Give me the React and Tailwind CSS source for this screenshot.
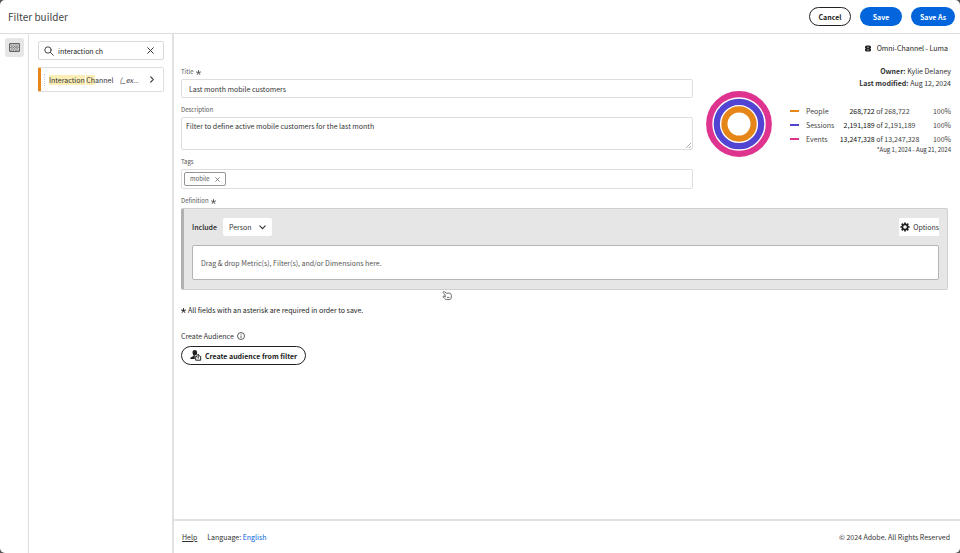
import React from 'react';

const stats = [
  { name: 'People', count: '268,722', total: '268,722', share: '100%', color: 'bg-[#e68619]' },
  { name: 'Sessions', count: '2,191,189', total: '2,191,189', share: '100%', color: 'bg-[#5144d3]' },
  { name: 'Events', count: '13,247,328', total: '13,247,328', share: '100%', color: 'bg-[#de3490]' },
];

function Header() {
  return (
    <header className="flex h-[34px] shrink-0 items-center justify-between border-b border-[#dedede] pl-2 pr-[5px]">
      <h1 className="text-[10px] leading-4 text-[#444]">Filter builder</h1>
      <div className="flex items-center gap-[9px] text-[7px] font-bold leading-3">
        <button type="button" className="h-[19px] w-[42px] rounded-full border border-[#222] bg-white text-[#222]">Cancel</button>
        <button type="button" className="h-[19px] w-[42px] rounded-full bg-[#0265dc] text-white">Save</button>
        <button type="button" className="h-[19px] w-[44px] rounded-full bg-[#0265dc] text-white">Save As</button>
      </div>
    </header>
  );
}

function Rail() {
  return (
    <nav className="w-[29px] shrink-0 border-r border-[#dedede] px-[5px] pt-1">
      <button type="button" aria-label="Components" className="flex h-[19px] w-[19px] items-center justify-center rounded-[3px] bg-[#e6e6e6]">
        <svg width="11" height="9" viewBox="0 0 11 9" fill="none" stroke="#444" strokeWidth="0.8">
          <rect x="0.5" y="0.5" width="10" height="8" rx="0.5" />
          <path d="M1.200 2h1.500M3.700 2h1.500M6.200 2h1.500M8.600 2h1.200M2.200 3.300h1.500M4.800 3.300h1.500M7.300 3.300h1.500M1.200 4.600h1.500M3.700 4.600h1.500M6.200 4.600h1.500M8.600 4.600h1.200M2.200 5.900h1.500M4.800 5.900h1.500M7.300 5.900h1.500M1.200 7.200h1.500M3.700 7.200h1.500M6.200 7.200h1.500M8.600 7.200h1.200" />
        </svg>
      </button>
    </nav>
  );
}

function Components() {
  return (
    <aside className="w-[145px] shrink-0 border-r-2 border-[#e1e1e1] pl-[9px] pr-2 pt-[7px]">
      <div className="flex h-[19px] items-center rounded-[2px] border border-[#dadada] pl-[5px] pr-[9px]">
        <svg width="10" height="10" viewBox="0 0 10 10" fill="none" stroke="#444" strokeWidth="1" strokeLinecap="round">
          <circle cx="4" cy="4" r="3.2" />
          <path d="M6.4 6.4 9.3 9.3" />
        </svg>
        <input aria-label="Search components" defaultValue="interaction ch" className="ml-1 min-w-0 flex-1 bg-transparent text-[7px] leading-3 text-[#222] outline-none" />
        <button type="button" aria-label="Clear search">
          <svg width="7" height="7" viewBox="0 0 7 7" stroke="#333" strokeWidth="1" strokeLinecap="round">
            <path d="M.7.7l5.6 5.6M6.3.7.7 6.3" />
          </svg>
        </button>
      </div>
      <button type="button" className="mt-[7px] flex h-[25px] w-full items-center overflow-hidden rounded-[2px] border border-l-[3px] border-[#dfdfdf] border-l-[#e68619] pr-[9px] text-left text-[7px] leading-3 text-[#333]">
        <span className="ml-[3px] h-3 border-l border-dotted border-[#ccc]" />
        <span className="ml-1 whitespace-nowrap">
          <mark className="bg-[#faedb5] text-inherit">Interaction</mark>{' '}
          <mark className="bg-[#faedb5] text-inherit">Ch</mark>annel
        </span>
        <i className="ml-[6px]">(_ex...</i>
        <svg className="ml-auto" width="4" height="7" viewBox="0 0 4 7" fill="none" stroke="#333" strokeWidth="1.1" strokeLinecap="round">
          <path d="M.7.8 3.3 3.5.7 6.2" />
        </svg>
      </button>
    </aside>
  );
}

function Label({ htmlFor, required, children }) {
  return (
    <label htmlFor={htmlFor} className="flex h-[14px] items-center gap-[2px] text-[6px] leading-[14px] text-[#555]">
      {children}
      {required && <Asterisk />}
    </label>
  );
}

function Asterisk() {
  return (
    <svg width="5" height="5" viewBox="0 0 5 5" stroke="currentColor" strokeWidth="1" aria-hidden="true">
      <path d="M2.5 2.6V.2M2.5 2.6 4.9 1.9M2.5 2.6 4 4.8M2.5 2.6 1 4.8M2.5 2.6.1 1.9" />
    </svg>
  );
}

function Form() {
  return (
    <div className="min-w-0 flex-1">
      <Label htmlFor="title" required>Title</Label>
      <input id="title" defaultValue="Last month mobile customers" className="block h-[19px] w-full rounded-[2px] border border-[#dedede] px-[7px] text-[7px] leading-3 text-[#333]" />
      <div className="h-[5px]" />
      <Label htmlFor="description">Description</Label>
      <div className="relative">
        <textarea id="description" defaultValue="Filter to define active mobile customers for the last month" className="block h-[33px] w-full resize-none rounded-[2px] border border-[#dedede] px-1 py-[2px] text-[7px] leading-3 text-[#333]" />
        <svg className="absolute bottom-[2px] right-[2px]" width="5" height="5" viewBox="0 0 5 5" stroke="#888" strokeWidth="0.7">
          <path d="M0 5 5 0M2.8 5 5 2.8" />
        </svg>
      </div>
      <div className="h-[5px]" />
      <Label htmlFor="tags">Tags</Label>
      <div className="flex h-5 items-center rounded-[2px] border border-[#dedede] px-[2px]">
        <span className="flex h-[14px] items-center gap-[5px] rounded-[2px] border border-[#959595] px-[5px] text-[6px] leading-3 text-[#555]">
          mobile
          <button type="button" aria-label="Remove tag mobile">
            <svg width="5" height="5" viewBox="0 0 5 5" stroke="#666" strokeWidth="0.8">
              <path d="M.4.4l4.2 4.2M4.6.4.4 4.6" />
            </svg>
          </button>
        </span>
        <input id="tags" className="h-3 min-w-0 flex-1 outline-none" />
      </div>
    </div>
  );
}

function Summary() {
  return (
    <div className="w-[258px] shrink-0">
      <div className="text-right text-[7px] leading-3 text-[#333]">
        <p><b>Owner:</b> Kylie Delaney</p>
        <p><b>Last modified:</b> Aug 12, 2024</p>
      </div>
      <div className="flex items-start pt-[2px]">
        <svg className="ml-[13px] shrink-0" width="66" height="66" viewBox="0 0 66 66" fill="none">
          <circle cx="33" cy="33" r="29.8" stroke="#de3490" strokeWidth="6.2" />
          <circle cx="33" cy="33" r="22.2" stroke="#5144d3" strokeWidth="6.2" />
          <circle cx="33" cy="33" r="14.6" stroke="#e68619" strokeWidth="6.2" />
        </svg>
        <div className="ml-[18px] flex-1 pt-[13px]">
          <table className="w-full table-fixed text-[7px] leading-[14px] text-[#444]">
            <tbody>
              {stats.map((s) => (
                <tr key={s.name}>
                  <td className="w-4 p-0"><span className={`block h-[2px] w-[9px] ${s.color}`} /></td>
                  <th scope="row" className="w-[32px] p-0 text-left font-normal">{s.name}</th>
                  <td className="whitespace-nowrap p-0 text-center"><span className="text-[#111]">{s.count}</span> of {s.total}</td>
                  <td className="w-[30px] p-0 text-right">{s.share}</td>
                </tr>
              ))}
            </tbody>
          </table>
          <p className="text-right text-[6px] leading-[8px] text-[#333]">*Aug 1, 2024 - Aug 21, 2024</p>
        </div>
      </div>
    </div>
  );
}

function Definition() {
  return (
    <section className="mr-[3px]">
      <Label htmlFor="scope" required>Definition</Label>
      <div className="rounded-[2px] border border-l-[3px] border-[#cfcfcf] border-l-[#b1b1b1] bg-[#e6e6e6] px-2 py-[9px]">
        <div className="flex h-[18px] items-center text-[7px] leading-3 text-[#333]">
          <span className="font-medium text-[#222]">Include</span>
          <div className="relative ml-[6px]">
            <select id="scope" className="block h-[18px] w-[49px] appearance-none rounded-[2px] bg-white pl-[6px] text-[7px] leading-3 text-[#333]">
              <option>Person</option>
            </select>
            <svg className="pointer-events-none absolute right-[6px] top-[7px]" width="7" height="5" viewBox="0 0 7 5" fill="none" stroke="#333" strokeWidth="1.1" strokeLinecap="round">
              <path d="M.8.8 3.5 3.7 6.2.8" />
            </svg>
          </div>
          <button type="button" className="ml-auto flex h-[18px] items-center gap-[3px] bg-white pl-[1px] text-[7px] leading-3">
            <svg width="10" height="10" viewBox="0 0 10 10" fill="none" stroke="#222">
              <circle cx="5" cy="5" r="2.7" strokeWidth="1.8" />
              <path strokeWidth="1.7" d="M5 .4v1.8M5 7.8v1.8M.4 5h1.8M7.8 5h1.8M1.7 1.7 3 3M7 7l1.3 1.3M8.3 1.7 7 3M3 7 1.7 8.3" />
            </svg>
            Options
          </button>
        </div>
        <div className="mt-[9px] flex h-[35px] items-center rounded-[2px] border border-[#b5b5b5] bg-white px-2 text-[7px] leading-3 text-[#555]">
          Drag &amp; drop Metric(s), Filter(s), and/or Dimensions here.
        </div>
      </div>
    </section>
  );
}

function Audience() {
  return (
    <section className="text-[7px] leading-3 text-[#222]">
      <p className="mt-[14px] flex items-center gap-[2px]"><Asterisk />All fields with an asterisk are required in order to save.</p>
      <h2 className="mt-[14px] flex items-center gap-[3px] text-[#333]">
        Create Audience
        <svg width="8" height="8" viewBox="0 0 8 8" fill="none" stroke="#333" strokeWidth="0.8">
          <circle cx="4" cy="4" r="3.5" />
          <path d="M4 3.5V6M4 1.9v.8" />
        </svg>
      </h2>
      <button type="button" className="mt-1 flex h-[19px] items-center gap-[3px] rounded-full border border-[#222] px-2 font-bold leading-3">
        <svg width="12" height="11" viewBox="0 0 12 11">
          <path fill="#222" d="M4.800 0C3.300 0 2.500 1.100 2.500 2.600c0 1 .4 2 1 2.600v.7C2 6.500.6 7 .4 8.200V9h4.400V5.200h1.500c.5-.6.8-1.600.8-2.600C7.100 1.100 6.300 0 4.800 0z" />
          <path fill="none" stroke="#222" strokeWidth="1" d="M6.900 6.500H5.700v3.700h5V6.500H9.700M8.200 8.600V4.400M6.800 5.700l1.400-1.500 1.400 1.500" />
        </svg>
        Create audience from filter
      </button>
    </section>
  );
}

function HandCursor() {
  return (
    <svg className="pointer-events-none absolute left-[442px] top-[290px]" width="10" height="11" viewBox="0 0 10 11" fill="#fff" stroke="#444" strokeWidth="0.8" strokeLinejoin="round">
      <path d="M1.300 1.800c.4-.5.900-.3 1.400 0l2 1.500 2.500-.2c1.300 0 2.100.9 2.100 2.200v1.800c0 1.500-.8 2.500-2.200 2.500H4.700c-1 0-1.500-.4-2.100-1.100L1.200 6.900c-.4-.7.300-1.200.9-.8l1.300.7-.6-2.500L1.300 2.800c-.3-.3-.3-.7 0-1z" />
      <path d="M5 7.400h2.400" />
    </svg>
  );
}

export default function App() {
  return (
    <div className="min-h-screen bg-[#555] font-['Noto_Sans_CJK_SC',sans-serif]">
      <div className="relative flex min-h-screen flex-col overflow-hidden rounded-[5px] bg-white">
        <Header />
        <div className="flex flex-1">
          <Rail />
          <Components />
          <div className="flex min-w-0 flex-1 flex-col">
            <main className="flex-1 pl-[7px] pr-[9px]">
              <div className="flex items-center justify-end gap-[6px] pb-[3px] pr-[3px] text-[7px] leading-7 text-[#222]">
                <svg width="6" height="7" viewBox="0 0 6 7">
                  <rect x="0" y="0.500" width="6" height="6" rx="1.500" fill="#222" />
                  <path stroke="#fff" strokeWidth="0.600" d="M2 2.200h2M2 4.800h2M0 3.500h.8M5.200 3.500H6" />
                </svg>
                Omni-Channel - Luma
              </div>
              <div className="flex">
                <Form />
                <Summary />
              </div>
              <div className="h-[5px]" />
              <Definition />
              <Audience />
            </main>
            <footer className="flex h-[34px] items-center border-t-2 border-[#e1e1e1] pl-2 pr-[10px] text-[7px] leading-3 text-[#333]">
              <a href="#help" className="underline">Help</a>
              <span className="ml-[10px]">Language: <a href="#language" className="text-[#0265dc]">English</a></span>
              <span className="ml-auto">© 2024 Adobe. All Rights Reserved</span>
            </footer>
          </div>
        </div>
        <HandCursor />
      </div>
    </div>
  );
}
